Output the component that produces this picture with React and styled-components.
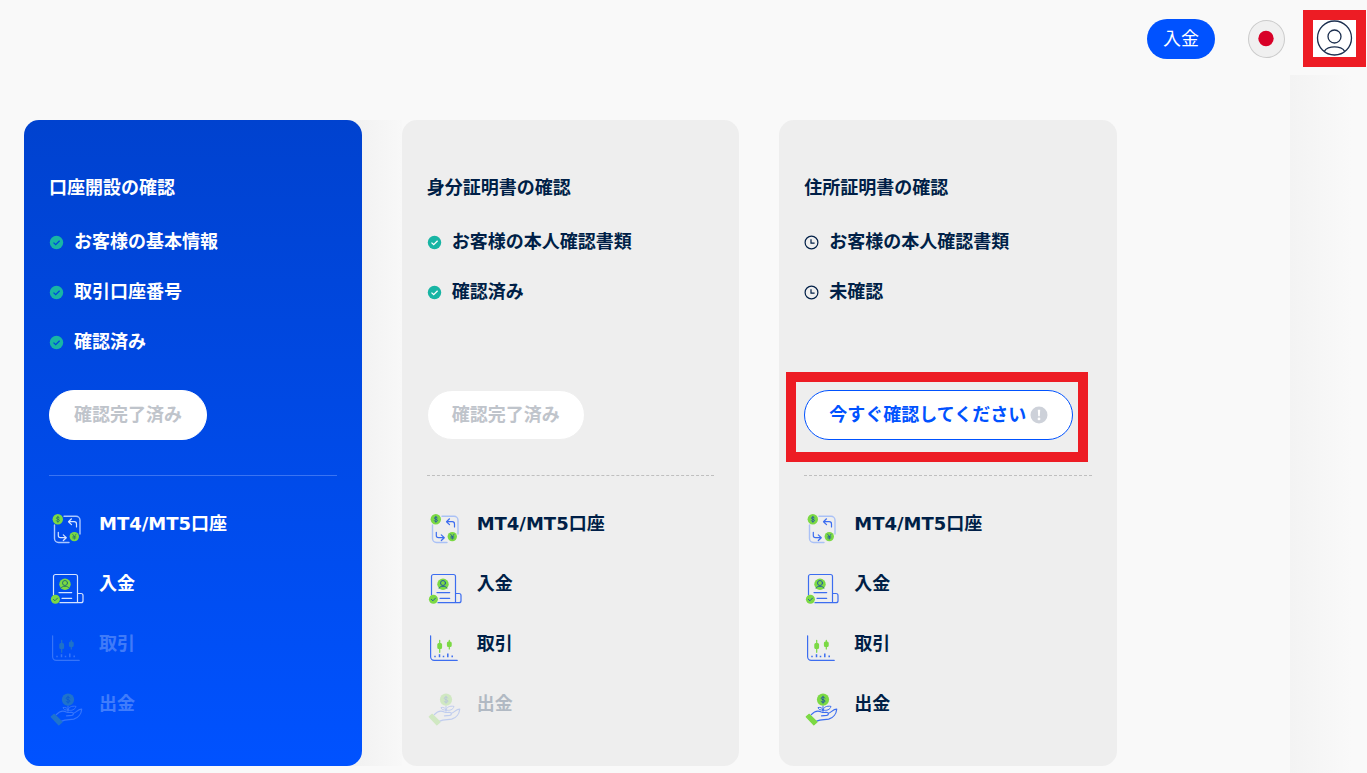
import React from 'react'
import styled, { createGlobalStyle, css } from 'styled-components'

const navy = '#001f47'
const blue = '#0052ff'
const green = '#7bd944'
const teal = '#18b5a4'
const markRed = '#ed1c24'

const GlobalStyle = createGlobalStyle`
  * {
    box-sizing: border-box;
  }
  body {
    margin: 0;
    background: #f9f9f9;
    color: ${navy};
    font-family: "DejaVu Sans", "Noto Sans CJK JP", sans-serif;
    font-size: 18px;
  }
  button {
    font-family: inherit;
    font-size: inherit;
    cursor: pointer;
  }
`
const Header = styled.header`
  display: flex;
  align-items: center;
  justify-content: flex-end;
  height: 75px;
  padding: 2px 1px 0 24px;
`
const DepositButton = styled.button`
  height: 40px;
  padding: 0 16px;
  border: 0;
  border-radius: 20px;
  background: ${blue};
  color: white;
  line-height: 38px;
`
const LanguageButton = styled.button`
  display: grid;
  place-items: center;
  width: 37px;
  height: 38px;
  margin: 0 18px 0 33px;
  padding: 0;
  border: 1px solid #cbcbcb;
  border-radius: 50%;
  background: #f0f0f0;
`
const ProfileButton = styled.button`
  display: grid;
  place-items: center;
  width: 63px;
  height: 57px;
  padding: 0;
  border: 10px solid ${markRed};
  background: white;
`
const Body = styled.div`
  display: grid;
  grid-template-columns: 1fr 77px;
`
const SideShade = styled.div`
  background: linear-gradient(to right, #f3f3f3, #f9f9f9 80%);
`
const Cards = styled.main`
  display: grid;
  grid-template-columns: repeat(3, 1fr);
  grid-gap: 40px;
  padding: 45px 173px 7px 24px;
`
const CardStyled = styled.section`
  position: relative;
  display: flex;
  flex-direction: column;
  padding: 53px 25px 32px;
  border-radius: 15px;
  background: #eee;
  --line: #3c6df0;
  --soft-line: #aac1f6;
  --glyph: #1d4fa8;
  --tick: white;
  ${props => props.$active && css`
    background: linear-gradient(#0042cf, ${blue});
    color: white;
    --line: #d5e3ff;
    --soft-line: #a9c6ff;
    --glyph: #1f6f6a;
    --tick: #0047dd;
    &::after {
      content: "";
      position: absolute;
      z-index: -1;
      top: 0;
      bottom: 0;
      left: 50%;
      right: -40px;
      background: linear-gradient(to right, #f2f2f2 80%, #f8f8f8);
    }
  `}
`
const CardTitle = styled.h2`
  margin: 0 0 14px;
  font-size: 18px;
  line-height: 30px;
`
const Steps = styled.ul`
  min-height: 150px;
  margin: 0 0 23px;
  padding: 0;
  list-style: none;
`
const Step = styled.li`
  display: flex;
  align-items: center;
  gap: 10px;
  height: 50px;
  font-weight: bold;
  line-height: 50px;
`
const ActionWrap = styled.div`
  position: relative;
  align-self: flex-start;
  ${props => props.$marked && css`
    &::after {
      content: "";
      position: absolute;
      inset: -18px -15px -22px -18px;
      border: 10px solid ${markRed};
      pointer-events: none;
    }
  `}
`
const ActionButton = styled.button`
  display: flex;
  align-items: center;
  gap: 4px;
  height: 50px;
  padding: 0 24px;
  border: 1px solid ${blue};
  border-radius: 25px;
  background: white;
  color: ${blue};
  font-weight: bold;
  line-height: 48px;
  white-space: nowrap;
  &:disabled {
    border-color: ${props => props.$active ? 'white' : '#eee'};
    color: #bfc4cb;
    cursor: default;
  }
`
const Divider = styled.hr`
  width: 100%;
  margin: 35px 0 18px;
  border: 0;
  border-top: 1px ${props => props.$active ? 'solid #3a74f2' : 'dashed #bfbfbf'};
`
const Features = styled.ul`
  margin: 0;
  padding: 0;
  list-style: none;
`
const Feature = styled.li`
  display: flex;
  gap: 14px;
  height: 60px;
  font-weight: bold;
  line-height: 60px;
  opacity: ${props => props.$dim ? 0.25 : 1};
  svg {
    margin-top: 16px;
  }
`

const CheckIcon = () => (
  <svg width="15" height="15" viewBox="0 0 15 15" fill="none">
    <circle cx="7.5" cy="7.5" r="6.7" fill={teal} />
    <path d="M4.5 7.6l2.2 2.1 3.9-3.9" stroke="var(--tick)" strokeWidth="1.3" />
  </svg>
)
const ClockIcon = () => (
  <svg width="15" height="15" viewBox="0 0 15 15" fill="none" stroke={navy} strokeWidth="1.2">
    <circle cx="7.5" cy="7.5" r="6.4" />
    <path d="M7 4.2v3.9h3.6" />
  </svg>
)
const AlertIcon = () => (
  <svg width="18" height="18" viewBox="0 0 18 18">
    <circle cx="9" cy="9" r="8.5" fill="#cdd1d9" />
    <path d="M7.8 3.8h2.4l-.4 6.4H8.2z" fill="white" />
    <circle cx="9" cy="12.9" r="1.4" fill="white" />
  </svg>
)
const JapanFlag = () => (
  <svg width="35" height="36" viewBox="0 0 35 36">
    <circle cx="17" cy="17.5" r="7.700" fill="#d80027" />
  </svg>
)
const ProfileIcon = () => (
  <svg width="37" height="37" viewBox="0 0 37 37" fill="none" stroke="#1c2f4f" strokeWidth="1.3">
    <circle cx="18.5" cy="18" r="17" />
    <circle cx="18.5" cy="16.5" r="6.5" />
    <path d="M8.5 31.3c1-3 6-4.500 10-4.500s9 1.500 10 4.500" />
  </svg>
)
const Drawing = ({children}) => (
  <svg width="36" height="36" viewBox="0 0 36 36" fill="none" stroke="var(--line)" strokeWidth="1.2" strokeLinecap="round" strokeLinejoin="round">
    {children}
  </svg>
)
const AccountIcon = () => (
  <Drawing>
    <path d="M15 6.3h12a4 4 0 0 1 4 4V24M5.5 15v13.500a4 4 0 0 0 4 4H20" stroke="var(--soft-line)" strokeWidth="1.4" />
    <path d="M22.5 8.8l-3 2.9 3 2.9M19.700 11.700h5.600a2.200 2.200 0 0 1 2.200 2.200v3M9.300 22.300v3.200a2.200 2.200 0 0 0 2.200 2.200h5.600M14.300 24.900l3 2.800-3 2.800" />
    <circle cx="8.8" cy="9.3" r="5.2" fill={green} stroke="none" />
    <path d="M10.4 7.8c-.6-1-3-.9-3 .3 0 1.5 3.1.8 3.1 2.4 0 1.3-2.700 1.300-3.300.2M8.900 6.300v6" stroke="var(--glyph)" strokeWidth=".8" />
    <circle cx="25.3" cy="26.6" r="4.7" fill={green} stroke="none" />
    <path d="M23.6 24.2l1.7 2.5 1.7-2.5M25.3 26.7v2.5M23.8 26.8h3M23.8 28h3" stroke="var(--glyph)" strokeWidth=".7" />
  </Drawing>
)
const DepositIcon = () => (
  <Drawing>
    <path d="M4.5 25V6.5a2 2 0 0 1 2-2h20a2 2 0 0 1 2 2v26.200H11M28.500 23.500H32a2 2 0 0 1 2 2v5.200a2 2 0 0 1-2 2h-3.500M10 22.600h12.700M13 28.300h9.700" />
    <circle cx="16" cy="14.3" r="5.7" fill={green} stroke="none" />
    <circle cx="16" cy="13" r="2.5" stroke="var(--glyph)" strokeWidth=".9" />
    <path d="M12 18c1-2.4 7-2.4 8 0" stroke="var(--glyph)" strokeWidth=".9" />
    <circle cx="6.4" cy="29.3" r="4.5" fill={green} stroke="none" />
    <path d="M4.4 29.4l1.5 1.4 2.6-2.7" stroke="var(--glyph)" strokeWidth=".9" />
  </Drawing>
)
const TradeIcon = () => (
  <Drawing>
    <path d="M3.6 5.8v21a3.6 3.6 0 0 0 3.6 3.6h23" />
    <path d="M8 25.800v1.400M12.500 24.300v2.900M16.500 25.800v1.400M20.800 23.500v3.700M25.200 25.500v1.700" strokeLinecap="butt" strokeWidth="1.5" />
    <g stroke={green} fill={green}>
      <path d="M12.7 10.3v12M22.3 10.3v8.7" />
      <rect x="10.900" y="13.5" width="3.6" height="5" rx="1" />
      <rect x="20.5" y="12" width="3.6" height="4.5" rx="1" />
    </g>
  </Drawing>
)
const WithdrawIcon = () => (
  <Drawing>
    <path d="M7.3 24.7c3.5-4 6.7-4.5 10-2.7 2 1 4.500.2 6 .5 1.600.5 1.300 2.700-.6 2.900l-5.200.4M24.500 23.300c3-1 4.600-4.200 8.200-4.100-.4 4.500-3.500 8.700-8 10-4 .9-8-.3-12 1.900" />
    <path d="M19 16v5.3M19 20c-2.6.4-4.5-.5-5-2.400 2.500-.6 4.400.3 5 2.400zM19 20c.5-2.800 3.500-4.400 8-3.600-.8 3.200-4.300 4.800-8 3.600z" strokeWidth="1" />
    <circle cx="19" cy="9.6" r="6.1" fill={green} stroke="none" />
    <path d="M20.9 8c-.7-1.3-3.7-1.2-3.7.3 0 1.8 3.8 1 3.8 2.8 0 1.6-3.3 1.5-4 .2M19 6.2v7" stroke="var(--glyph)" strokeWidth=".9" />
    <path d="M2.3 26.800l3-2.500 7.700 7.700-3.200 2.900z" fill={green} stroke={green} />
  </Drawing>
)

const features = [
  { label: 'MT4/MT5口座', Icon: AccountIcon },
  { label: '入金', Icon: DepositIcon },
  { label: '取引', Icon: TradeIcon },
  { label: '出金', Icon: WithdrawIcon },
]
const cards = [
  {
    title: '口座開設の確認',
    steps: ['お客様の基本情報', '取引口座番号', '確認済み'],
    action: '確認完了済み',
    done: true,
    active: true,
    enabled: 2,
  },
  {
    title: '身分証明書の確認',
    steps: ['お客様の本人確認書類', '確認済み'],
    action: '確認完了済み',
    done: true,
    enabled: 3,
  },
  {
    title: '住所証明書の確認',
    steps: ['お客様の本人確認書類', '未確認'],
    action: '今すぐ確認してください',
    enabled: 4,
  },
]

function Card({title, steps, action, done, active, enabled}){
  return(
    <CardStyled $active={active}>
      <CardTitle>{title}</CardTitle>
      <Steps>
        {steps.map(step => (
          <Step key={step}>
            {done ? <CheckIcon /> : <ClockIcon />}
            {step}
          </Step>
        ))}
      </Steps>
      <ActionWrap $marked={!done}>
        <ActionButton type="button" disabled={done} $active={active}>
          {action}
          {!done && <AlertIcon />}
        </ActionButton>
      </ActionWrap>
      <Divider $active={active} />
      <Features>
        {features.map(({label, Icon}, index) => (
          <Feature key={label} $dim={index >= enabled}>
            <Icon />
            {label}
          </Feature>
        ))}
      </Features>
    </CardStyled>
  )
}

export default function App(){
  return(
    <>
      <GlobalStyle />
      <Header>
        <DepositButton type="button">入金</DepositButton>
        <LanguageButton type="button" aria-label="日本語">
          <JapanFlag />
        </LanguageButton>
        <ProfileButton type="button" aria-label="プロフィール">
          <ProfileIcon />
        </ProfileButton>
      </Header>
      <Body>
        <Cards>
          {cards.map(card => <Card key={card.title} {...card} />)}
        </Cards>
        <SideShade />
      </Body>
    </>
  )
}
